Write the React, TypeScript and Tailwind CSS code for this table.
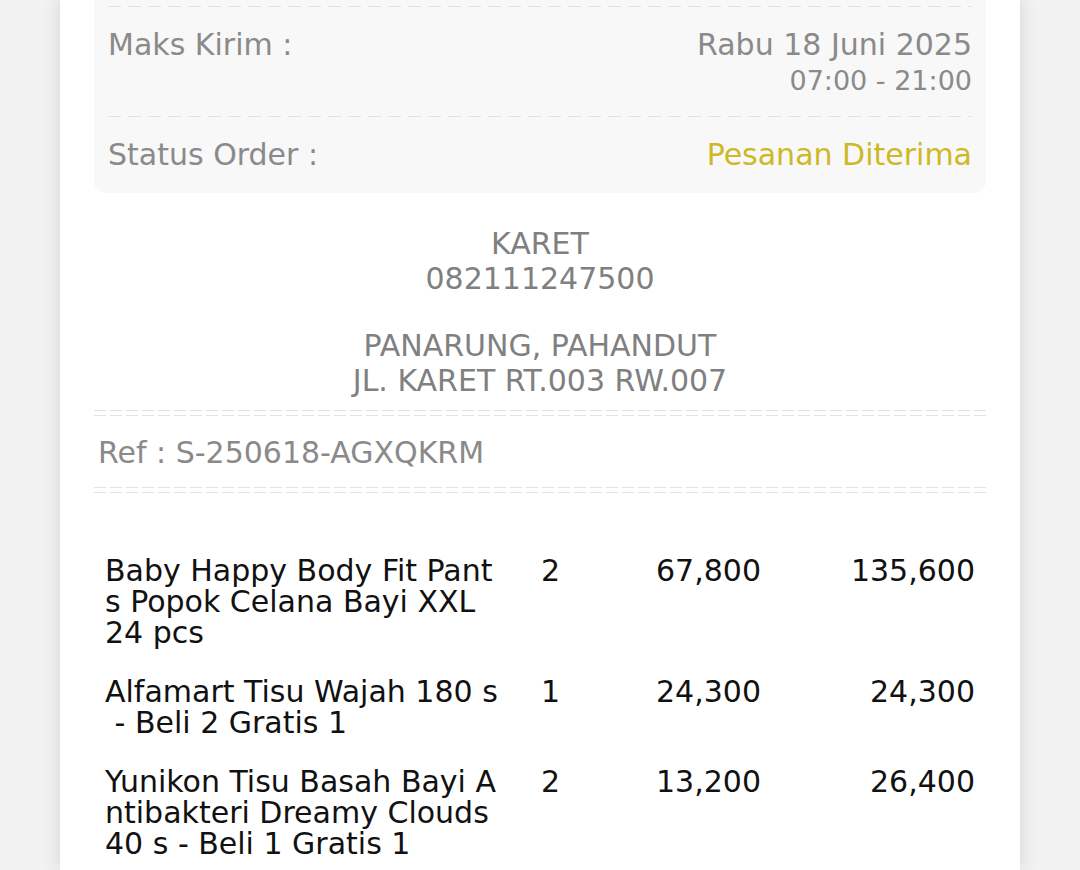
import React from "react";

const items = [
  { name: ["Baby Happy Body Fit Pant", "s Popok Celana Bayi XXL", "24 pcs"], qty: "2", price: "67,800", total: "135,600" },
  { name: ["Alfamart Tisu Wajah 180 s", "\u00a0- Beli 2 Gratis 1"], qty: "1", price: "24,300", total: "24,300" },
  { name: ["Yunikon Tisu Basah Bayi A", "ntibakteri Dreamy Clouds", "40 s - Beli 1 Gratis 1"], qty: "2", price: "13,200", total: "26,400" },
];

function SingleDash() {
  return (
    <div className="h-px w-full bg-[repeating-linear-gradient(to_right,#e2e2e2_0px,#e2e2e2_13px,transparent_13px,transparent_20px)]" />
  );
}

function DoubleDash({ className = "" }: { className?: string }) {
  return (
    <div className={"flex flex-col gap-[4px] " + className}>
      <div className="h-px w-full bg-[repeating-linear-gradient(to_right,#e2e2e2_0px,#e2e2e2_12px,transparent_12px,transparent_16px)]" />
      <div className="h-px w-full bg-[repeating-linear-gradient(to_right,#e2e2e2_0px,#e2e2e2_12px,transparent_12px,transparent_16px)]" />
    </div>
  );
}

export default function App() {
  return (
    <div className="h-[870px] w-[1080px] overflow-hidden bg-[#f2f2f2] font-['DejaVu_Sans',sans-serif] text-[30px]">
      <div className="mx-auto h-full w-[960px] bg-white px-[34px] shadow-[0_0_18px_rgba(0,0,0,0.13)]">
        {/* Info box */}
        <div className="rounded-b-[12px] bg-[#f8f8f8] px-[14px] pt-[6px] text-[#8a8a8a]">
          <SingleDash />
          <div className="flex justify-between pt-[20px] pb-[17px] leading-[36px]">
            <span>Maks Kirim :</span>
            <div className="text-right">
              <div>Rabu 18 Juni 2025</div>
              <div className="text-[27px]">07:00 - 21:00</div>
            </div>
          </div>
          <SingleDash />
          <div className="flex justify-between py-[20px] leading-[36px]">
            <span>Status Order :</span>
            <span className="text-[#cdb826]">Pesanan Diterima</span>
          </div>
        </div>

        {/* Customer */}
        <div className="mt-[33px] text-center leading-[35px] text-[#808080]">
          <div>KARET</div>
          <div>082111247500</div>
          <div className="mt-[32px]">PANARUNG, PAHANDUT</div>
          <div>JL. KARET RT.003 RW.007</div>
        </div>

        <DoubleDash className="mt-[12px]" />
        <div className="mt-[19px] pl-[4px] leading-[36px] text-[#8a8a8a]">Ref : S-250618-AGXQKRM</div>
        <DoubleDash className="mt-[16px]" />

        {/* Items */}
        <div className="mt-[62px] px-[11px] text-[#111111]">
          {items.map((it, i) => (
            <div key={i} className="grid grid-cols-[436px_60px_164px_1fr] pb-[28px] leading-[31px]">
              <div>
                {it.name.map((l, j) => (
                  <div key={j} className="whitespace-pre">{l}</div>
                ))}
              </div>
              <div>{it.qty}</div>
              <div className="pr-[4px] text-right">{it.price}</div>
              <div className="text-right">{it.total}</div>
            </div>
          ))}
        </div>
      </div>
    </div>
  );
}
